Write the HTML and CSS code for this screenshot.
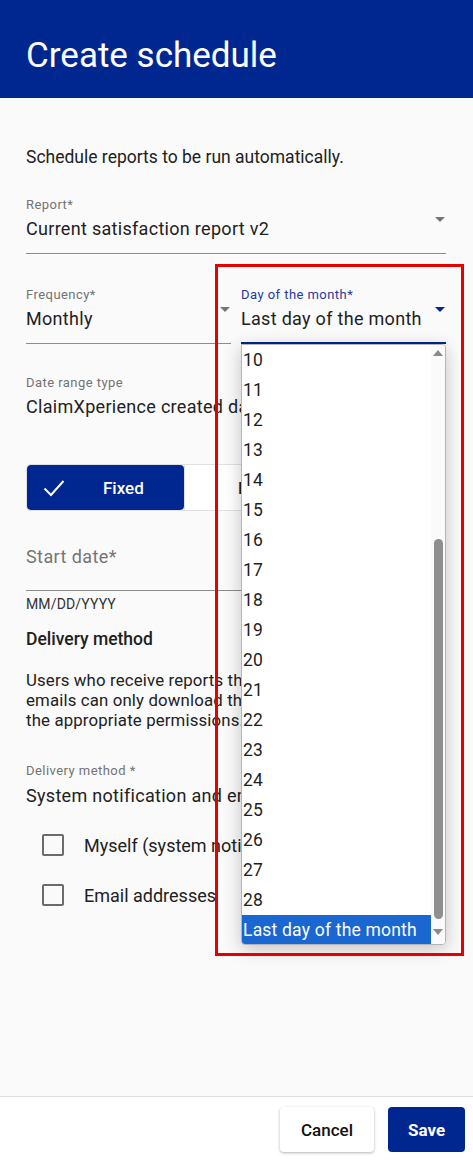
FILE: index.html
```html
<!DOCTYPE html>
<html lang="en">
<head>
<meta charset="utf-8">
<title>Create schedule</title>
<link rel="stylesheet" href="styles.css">
</head>
<body>
<div class="page">
  <header class="hdr"><h1 class="title">Create schedule</h1></header>

  <main class="content">
    <p class="intro">Schedule reports to be run automatically.</p>

    <div class="field f-report">
      <div class="label">Report*</div>
      <div class="value">Current satisfaction report v2</div>
      <span class="arrow"></span>
    </div>

    <div class="row">
      <div class="field f-half">
        <div class="label">Frequency*</div>
        <div class="value">Monthly</div>
        <span class="arrow"></span>
      </div>
      <div class="field f-half focused">
        <div class="label">Day of the month*</div>
        <div class="value">Last day of the month</div>
        <span class="arrow"></span>
      </div>
    </div>

    <div class="readonly">
      <div class="label">Date range type</div>
      <div class="value">ClaimXperience created date</div>
    </div>

    <div class="toggle">
      <div class="seg on">
        <svg class="check" width="22" height="18" viewBox="0 0 22 18"><polyline points="1.5,9.5 8,16 20.5,2" fill="none" stroke="#fff" stroke-width="2"/></svg>
        <span class="seg-text">Fixed</span>
      </div>
      <div class="seg off"><span class="seg-text">Floating</span></div>
    </div>

    <div class="field f-date">
      <div class="placeholder">Start date*</div>
    </div>
    <div class="helper">MM/DD/YYYY</div>

    <h2 class="section">Delivery method</h2>
    <p class="para">Users who receive reports through notifications and<br>emails can only download them if they have<br>the appropriate permissions.</p>

    <div class="readonly r-delivery">
      <div class="label">Delivery method *</div>
      <div class="value">System notification and email</div>
    </div>

    <div class="checks">
      <label class="check-row"><span class="box"></span><span class="check-text">Myself (system notification)</span></label>
      <label class="check-row"><span class="box"></span><span class="check-text">Email addresses</span></label>
    </div>
  </main>

  <footer class="ftr">
    <button class="btn btn-cancel">Cancel</button>
    <button class="btn btn-save">Save</button>
  </footer>

  <div class="listbox">
    <ul class="items">
      <li>10</li><li>11</li><li>12</li><li>13</li><li>14</li>
      <li>15</li><li>16</li><li>17</li><li>18</li><li>19</li>
      <li>20</li><li>21</li><li>22</li><li>23</li><li>24</li>
      <li>25</li><li>26</li><li>27</li><li>28</li>
      <li class="sel">Last day of the month</li>
    </ul>
    <div class="sbar">
      <span class="sb-up"></span>
      <div class="sb-track"><div class="sb-thumb"></div></div>
      <span class="sb-down"></span>
    </div>
  </div>

  <div class="annot"></div>
</div>
</body>
</html>
```

FILE: styles.css
```css
* { box-sizing: border-box; }
html, body { margin: 0; padding: 0; }
body {
  font-family: Roboto, "Noto Sans", "Liberation Sans", sans-serif;
  color: #212121;
  background: #fafafa;
}
.page {
  position: relative;
  width: 473px;
  height: 1161px;
  display: flex;
  flex-direction: column;
  overflow: hidden;
}
.hdr {
  height: 98px;
  background: #002790;
  padding: 36px 26px 0;
  flex: none;
}
.title {
  margin: 0;
  font-size: 35px;
  line-height: 40px;
  font-weight: 400;
  color: #fff;
}
.content {
  flex: 1;
  padding: 0 27px 0 26px;
}
.intro {
  margin: 49px 0 0;
  font-size: 17.5px;
  line-height: 20px;
}
.field {
  position: relative;
  border-bottom: 1px solid #8c8c8c;
  padding-bottom: 13px;
}
.label {
  font-size: 13px;
  line-height: 16px;
  color: #737373;
  letter-spacing: 0.45px;
}
.value {
  margin-top: 5px;
  font-size: 18px;
  line-height: 22px;
  letter-spacing: 0.3px;
  white-space: nowrap;
  overflow: hidden;
}
.arrow {
  position: absolute;
  right: 1px;
  top: 20px;
  width: 0;
  height: 0;
  border-left: 5px solid transparent;
  border-right: 5px solid transparent;
  border-top: 5px solid #757575;
}
.f-report { margin-top: 30px; }
.row {
  display: flex;
  gap: 10px;
  margin-top: 33px;
}
.f-half { flex: 1; min-width: 0; }
.focused { border-bottom: 2px solid #002790; padding-bottom: 12px; }
.focused .label { color: #1f3b9e; }
.focused .arrow { border-top-color: #002790; }
.readonly { margin-top: 31px; }
.toggle {
  display: flex;
  margin-top: 46px;
  height: 47px;
  border: 1px solid #e0e0e0;
  border-radius: 4px;
  overflow: hidden;
  background: #fff;
}
.seg {
  display: flex;
  align-items: center;
  font-size: 17px;
  font-weight: 500;
}
.seg.on {
  width: 157px;
  background: #002790;
  color: #fff;
  padding-left: 16px;
  border-radius: 4px;
}
.seg.on .seg-text { margin-left: 38px; }
.seg.off { flex: 1; padding-left: 53px; color: #212121; border-left: 1px solid #e0e0e0; }
.check { flex: none; }
.f-date {
  margin-top: 35px;
  padding-bottom: 22px;
}
.placeholder {
  font-size: 18px;
  line-height: 22px;
  letter-spacing: 0.4px;
  color: #757575;
}
.helper {
  margin-top: 5px;
  font-size: 14px;
  line-height: 16px;
  letter-spacing: 0.15px;
  color: #333;
}
.section {
  margin: 17px 0 0;
  font-size: 17.5px;
  line-height: 20px;
  font-weight: 500;
}
.para {
  margin: 21px 0 0;
  font-size: 16.8px;
  line-height: 20px;
  letter-spacing: 0.15px;
  white-space: nowrap;
}
.r-delivery { margin-top: 33px; }
.r-delivery .value { margin-top: 6px; }
.checks { margin-top: 13px; padding-left: 16px; }
.check-row {
  display: flex;
  align-items: center;
  height: 50px;
}
.box {
  width: 22px;
  height: 22px;
  border: 2px solid #6b6b6b;
  border-radius: 2px;
  flex: none;
}
.check-text {
  margin-left: 20px;
  font-size: 18px;
  white-space: nowrap;
}
.ftr {
  flex: none;
  height: 65px;
  border-top: 1px solid #dedede;
  background: #fff;
  display: flex;
  justify-content: flex-end;
  align-items: flex-start;
  gap: 14px;
  padding: 10px 8px 0 0;
}
.btn {
  height: 45px;
  border: none;
  border-radius: 4px;
  font-family: Roboto, "Noto Sans", sans-serif;
  font-size: 17px;
}
.btn-cancel {
  width: 94px;
  background: #fff;
  color: #111;
  font-weight: 500;
  box-shadow: 0 1px 3px rgba(0,0,0,0.3);
}
.btn-save {
  width: 77px;
  background: #002790;
  color: #fff;
  font-weight: 700;
}
.listbox {
  position: absolute;
  left: 241px;
  top: 344px;
  width: 205px;
  height: 601px;
  background: #fff;
  border: 1px solid #b5b5b5;
  border-radius: 0 4px 4px 4px;
  box-shadow: 0 4px 18px rgba(0,0,0,0.22);
  display: flex;
  overflow: hidden;
}
.items {
  list-style: none;
  margin: 0;
  padding: 0;
  flex: 1;
}
.items li {
  height: 30px;
  line-height: 30px;
  padding-left: 1px;
  font-size: 17.5px;
  letter-spacing: 0.2px;
  color: #1e1e1e;
  white-space: nowrap;
}
.items li.sel {
  background: #1a67d2;
  color: #fff;
}
.sbar {
  width: 14px;
  flex: none;
  display: flex;
  flex-direction: column;
  align-items: center;
  background: #fafafa;
}
.sb-up, .sb-down {
  width: 0;
  height: 0;
  border-left: 5px solid transparent;
  border-right: 5px solid transparent;
  flex: none;
}
.sb-up { border-bottom: 6px solid #8a8a8a; margin-top: 5px; }
.sb-down { border-top: 6px solid #8a8a8a; margin-top: 10px; margin-bottom: 9px; }
.sb-track {
  flex: 1;
  width: 9px;
  display: flex;
  flex-direction: column;
  justify-content: flex-end;
  margin-top: 5px;
}
.sb-thumb {
  height: 380px;
  background: #8f8f8f;
  border-radius: 5px;
}
.annot {
  position: absolute;
  left: 215px;
  top: 264px;
  width: 249px;
  height: 692px;
  border: 3px solid #e60000;
  pointer-events: none;
}
```
